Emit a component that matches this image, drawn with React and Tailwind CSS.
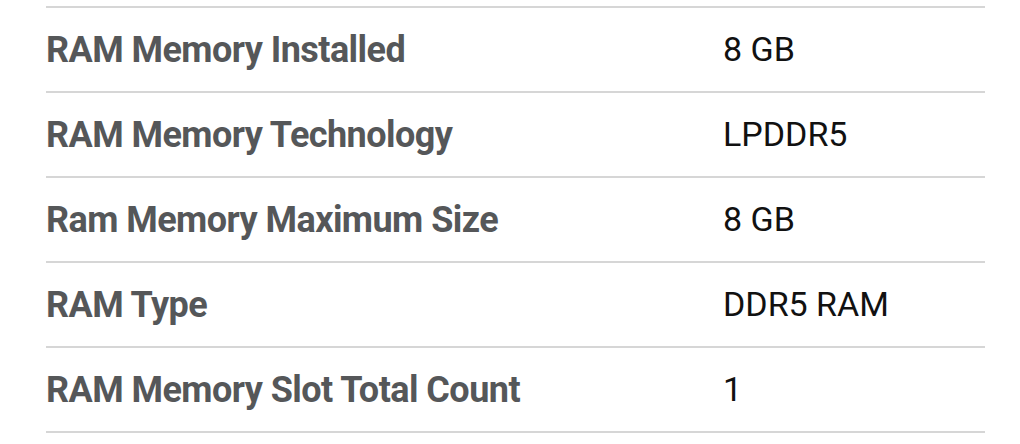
import React from "react";

const rows = [
  ["RAM Memory Installed", "8 GB"],
  ["RAM Memory Technology", "LPDDR5"],
  ["Ram Memory Maximum Size", "8 GB"],
  ["RAM Type", "DDR5 RAM"],
  ["RAM Memory Slot Total Count", "1"],
];

export default function App() {
  return (
    <div className="w-[1020px] h-[444px] bg-white overflow-hidden pt-[6px] pl-[46px]">
      <div className="w-[939px] border-t-2 border-[#d6d6d6]">
        {rows.map(([k, v]) => (
          <div key={k} className="flex items-center h-[85px] border-b-2 border-[#d6d6d6]">
            <div className="w-[677px] shrink-0 font-['Roboto',sans-serif] font-bold text-[36px] text-[#555759] tracking-[-0.55px]">
              {k}
            </div>
            <div className="font-['Roboto',sans-serif] text-[34px] text-[#111]">{v}</div>
          </div>
        ))}
      </div>
    </div>
  );
}
